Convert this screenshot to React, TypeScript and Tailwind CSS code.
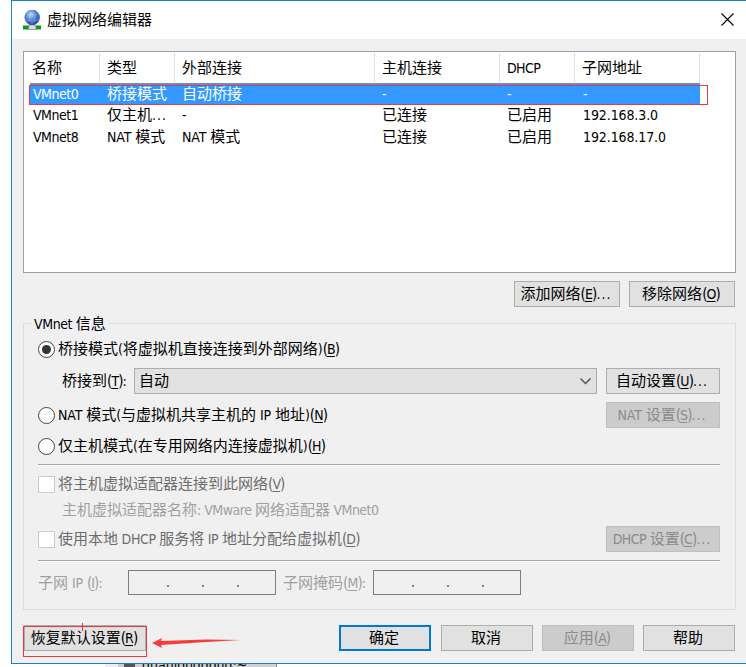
import React from 'react';

// Latin runs are set slightly smaller than the Chinese glyphs around them
const Label: React.FC<{ text: string; hotkey?: string; after?: string; latin?: string }> = ({ text, hotkey, after = '', latin = 'tracking-[-0.1px]' }) => (
  <span className="whitespace-pre">
    {text.split(/([\x20-\x7e]+)/).map((part, i) =>
      i % 2 ? <span key={i} className={`text-[14px] ${latin}`}>{part}</span> : part
    )}
    {hotkey && (
      <span className="text-[15px] tracking-[-0.9px]">
        (<span className="text-[14px] underline underline-offset-2">{hotkey}</span>)
      </span>
    )}
    {after && <span className="text-[14px] tracking-[1px]">{after}</span>}
  </span>
);

interface DialogButtonProps {
  className: string;
  disabled?: boolean;
  primary?: boolean;
  children: React.ReactNode;
}

const DialogButton: React.FC<DialogButtonProps> = ({ className, disabled, primary, children }) => {
  const look = primary
    ? 'border-2 border-[#0078d7] bg-[#e1e1e1]'
    : disabled
      ? 'border border-[#bfbfbf] bg-[#cccccc] text-[#8b8b8b]'
      : 'border border-[#adadad] bg-[#e1e1e1]';
  return (
    <button disabled={disabled} className={`flex h-[26px] shrink-0 items-center justify-center pr-[2px] ${look} ${className}`}>
      {children}
    </button>
  );
};

const Radio: React.FC<{ checked?: boolean }> = ({ checked }) => (
  <span className="flex h-[17px] w-[17px] shrink-0 items-center justify-center rounded-full border border-[#444] bg-white">
    {checked && <span className="h-[9px] w-[9px] rounded-full bg-[#333]" />}
  </span>
);

const Checkbox = () => <span className="h-[17px] w-[17px] shrink-0 border border-[#cccccc] bg-white" />;

const Divider = () => <div className="h-[2px] w-[682px] border-b border-white bg-[#a8a8a8]" />;

const IpField: React.FC<{ className: string }> = ({ className }) => (
  <div className={`flex h-[25px] shrink-0 items-center gap-[33px] border border-[#7f7f7f] bg-[#f0f0f0] ${className}`}>
    <span className="mt-[6px] h-[2px] w-[2px] bg-[#85809a]" />
    <span className="mt-[6px] h-[2px] w-[2px] bg-[#85809a]" />
    <span className="mt-[6px] h-[2px] w-[2px] bg-[#85809a]" />
  </div>
);

const AppIcon = () => (
  <svg width="19" height="21" viewBox="0 0 19 21">
    <defs>
      <radialGradient id="globe" cx="0.4" cy="0.3" r="0.7">
        <stop offset="0" stopColor="#c5daf8" />
        <stop offset="0.45" stopColor="#5f8fdc" />
        <stop offset="1" stopColor="#1d3f9c" />
      </radialGradient>
    </defs>
    <path d="M0 15.500h18v4H0z" fill="#0a9a18" />
    <path d="M7 13h4.500v2.500l1.500 1v3h-7.500v-3l1.500-1z" fill="#dcdcdc" stroke="#777" strokeWidth="0.6" />
    <circle cx="9.200" cy="7.500" r="7.400" fill="url(#globe)" stroke="#3157a8" strokeWidth="0.5" />
    <path d="M4 4q5 3 10.500 0M2 9q7 4 14.500 0M9 1q-5 6 0 13M9 1q6 7 0 13" fill="none" stroke="#b7cdf3" strokeWidth="0.5" opacity="0.6" />
  </svg>
);

const columns = 'grid grid-cols-[75px_75px_200px_125px_75px_125px]';

const headers = ['名称', '类型', '外部连接', '主机连接', 'DHCP', '子网地址'];

const networks = [
  ['VMnet0', '桥接模式', '自动桥接', '-', '-', '-'],
  ['VMnet1', '仅主机...', '-', '已连接', '已启用', '192.168.3.0'],
  ['VMnet8', 'NAT 模式', 'NAT 模式', '已连接', '已启用', '192.168.17.0'],
];

const NetworkTable = () => (
  <div className="relative ml-[11px] mt-[12px] h-[222px] w-[713px] border border-[#9ba0a8] bg-white pl-px pt-px">
    <div className={`${columns} h-[30px]`}>
      {headers.map((name) => (
        <div key={name} className="flex items-center border-r border-[#e0e0e0] pl-[7px]">
          <Label text={name} latin="tracking-[-0.6px]" />
        </div>
      ))}
    </div>
    <div>
      {networks.map((row, i) => (
        <div key={row[0]} className={`${columns} h-[21.500px] ${i === 0 ? 'text-white' : ''}`}>
          {row.map((cell, j) => (
            <div
              key={j}
              className={`flex items-center overflow-hidden ${i === 0 ? 'border-y border-dotted border-[#b88a50] bg-[#3399ff]' : ''} ${i === 0 && j === 0 ? 'ml-[5px] pl-[3px]' : j === 0 ? 'pl-[8px]' : 'pl-[7px]'}`}
            >
              <Label
                text={cell}
                latin={j === 0 ? 'tracking-[-0.5px]' : j === 5 ? 'pl-px tracking-[-0.1px]' : cell.endsWith('...') ? 'tracking-[1px]' : 'tracking-[-0.1px]'}
              />
            </div>
          ))}
        </div>
      ))}
    </div>
    {/* Red marker round the selected row */}
    <div className="absolute left-[5px] top-[33px] h-[20px] w-[679px] border border-[#f0383c]" />
  </div>
);

const VmnetInfo = () => (
  <fieldset className="relative ml-[11px] mt-[16px] h-[287px] w-[713px] border border-[#dcdcdc] pl-[14px]">
    <div className="absolute -top-[10px] left-[7px] flex h-[20px] items-center bg-[#f0f0f0] px-[3px]">
      <Label text="VMnet 信息" latin="tracking-[-0.4px]" />
    </div>
    <div className="mt-[14px] flex h-[22px] items-center gap-[3px]">
      <Radio checked />
      <Label text="桥接模式(将虚拟机直接连接到外部网络)" hotkey="B" />
    </div>
    <div className="mt-[8px] flex h-[26px] items-center">
      <div className="w-[96px] pl-[24px]">
        <Label text="桥接到" hotkey="T" after=":" />
      </div>
      <div className="flex h-[26px] w-[463px] items-center justify-between border border-[#adadad] bg-[#e1e1e1] pl-[4px] pr-[4px]">
        <Label text="自动" />
        <svg width="13" height="8" viewBox="0 0 13 8" fill="none" stroke="#555" strokeWidth="1.5">
          <path d="M1.500 1.500l5 5 5-5" />
        </svg>
      </div>
      <DialogButton className="ml-[9px] w-[114px]">
        <Label text="自动设置" hotkey="U" after="..." />
      </DialogButton>
    </div>
    <div className="mt-[8px] flex h-[26px] items-center gap-[3px]">
      <Radio />
      <Label text="NAT 模式(与虚拟机共享主机的 IP 地址)" hotkey="N" />
      <DialogButton disabled className="ml-auto mr-[15px] w-[114px]">
        <Label text="NAT 设置" hotkey="S" after="..." />
      </DialogButton>
    </div>
    <div className="mt-[7px] flex h-[22px] items-center gap-[3px]">
      <Radio />
      <Label text="仅主机模式(在专用网络内连接虚拟机)" hotkey="H" />
    </div>
    <div className="pt-[7px]"><Divider /></div>
    <div className="mt-[7px] flex h-[22px] items-center gap-[3px] text-[#6d6d6d]">
      <Checkbox />
      <Label text="将主机虚拟适配器连接到此网络" hotkey="V" />
    </div>
    <div className="mt-[4px] flex h-[22px] items-center pl-[24px] text-[#a0a0a0]">
      <Label text="主机虚拟适配器名称: VMware 网络适配器 VMnet0" latin="tracking-[-0.5px]" />
    </div>
    <div className="mt-[5px] flex h-[26px] items-center gap-[3px] text-[#6d6d6d]">
      <Checkbox />
      <Label text="使用本地 DHCP 服务将 IP 地址分配给虚拟机" hotkey="D" latin="tracking-[-0.4px]" />
      <DialogButton disabled className="ml-auto mr-[15px] w-[114px]">
        <Label text="DHCP 设置" hotkey="C" after="..." latin="tracking-[-0.5px]" />
      </DialogButton>
    </div>
    <div className="pt-[8px]"><Divider /></div>
    <div className="mt-[8px] flex items-center text-[#a0a0a0]">
      <div className="w-[90px]"><Label text="子网 IP " hotkey="I" after=":" /></div>
      <IpField className="w-[148px] pl-[38px]" />
      <div className="w-[97px] pl-[7px]"><Label text="子网掩码" hotkey="M" after=":" /></div>
      <IpField className="w-[148px] pl-[38px]" />
    </div>
  </fieldset>
);

const App = () => (
  <div className="relative h-[667px] w-[746px] overflow-hidden bg-white font-['DejaVu_Sans_Condensed','Noto_Sans_CJK_SC',sans-serif] text-[15px] leading-[20px] text-black">
    <div className="ml-[11px] h-[664px] w-[735px] border-y border-l border-[#1a7fd4] bg-[#f0f0f0]">
      {/* Title bar */}
      <div className="flex h-[38px] items-center bg-white pl-[11px]">
        <AppIcon />
        <h1 className="ml-[5px]">虚拟网络编辑器</h1>
        <svg className="-mt-[2px] ml-auto mr-[12px]" width="13" height="13" viewBox="0 0 13 13" stroke="#000" strokeWidth="1.100">
          <path d="M0.500 0.500l12 12M12.500 0.500l-12 12" />
        </svg>
      </div>

      <NetworkTable />

      <div className="mt-[8px] flex gap-[9px] pl-[502px]">
        <DialogButton className="w-[106px]">
          <Label text="添加网络" hotkey="E" after="..." />
        </DialogButton>
        <DialogButton className="w-[106px]">
          <Label text="移除网络" hotkey="O" />
        </DialogButton>
      </div>

      <VmnetInfo />

      {/* Dialog buttons */}
      <div className="relative mt-[15px] flex pl-[12px]">
        <DialogButton className="w-[122px]">
          <Label text="恢复默认设置" hotkey="R" />
        </DialogButton>
        <DialogButton primary className="ml-[193px] w-[92px]">确定</DialogButton>
        <DialogButton className="ml-[10px] w-[92px]">取消</DialogButton>
        <DialogButton disabled className="ml-[9px] w-[92px]">
          <Label text="应用" hotkey="A" />
        </DialogButton>
        <DialogButton className="ml-[9px] w-[92px]">帮助</DialogButton>
        {/* Red hand-drawn markers */}
        <div className="absolute left-[11px] top-[1px] h-[31px] w-[124px] border border-[#f0383c]" />
        <div className="absolute -top-[2px] left-[70px] h-[8px] w-px bg-[#f0383c]" />
        <svg className="absolute left-[140px] top-[12px]" width="90" height="12" viewBox="0 0 90 12">
          <path d="M0 6L10 1L9 4L54 2.500L89 3L54 5L9 8L10 11z" fill="#fb3a3c" />
        </svg>
      </div>
    </div>

    {/* Window behind the dialog */}
    <div className="ml-[105px] flex h-[3px] w-[172px] overflow-hidden border-r border-[#888] bg-[#d0d0d0]">
      <span className="h-full w-[13px] bg-[#eeeeee]" />
      <span className="ml-[6px] h-full w-[11px] bg-[#555]" />
      <span className="-mt-[6px] ml-[7px] text-[14px] leading-[14px]">quanlongdong:~</span>
    </div>
  </div>
);

export default App;
